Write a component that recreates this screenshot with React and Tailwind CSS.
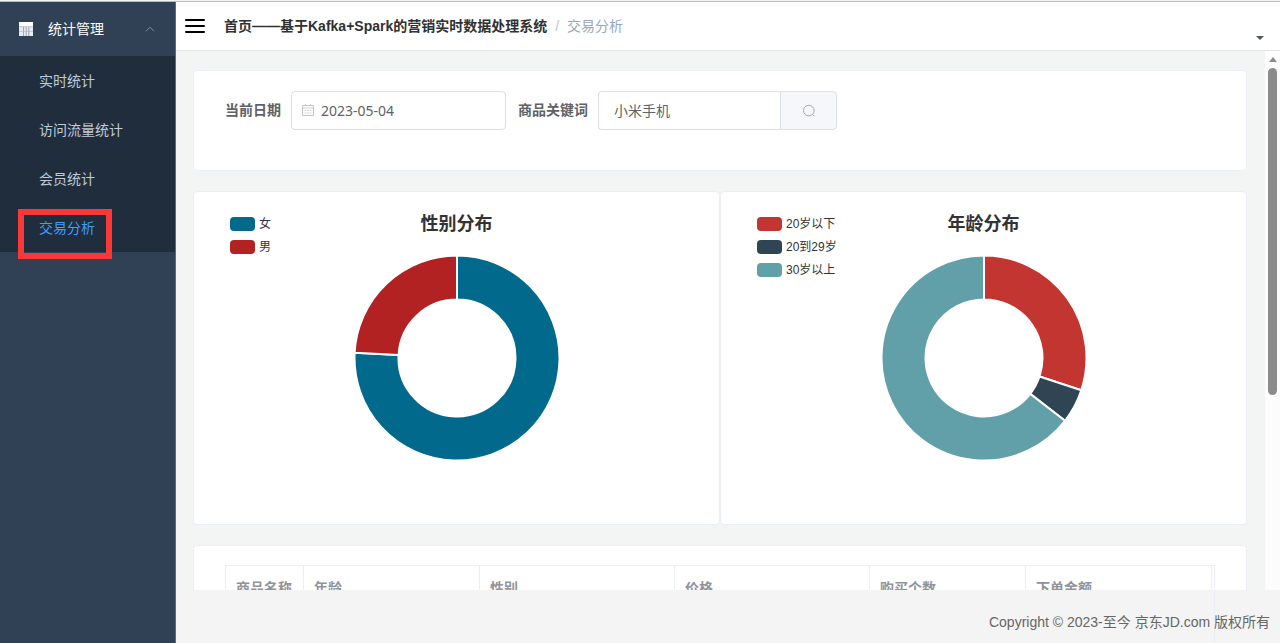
import React, { useState } from 'react'

const menuItems = ['实时统计', '访问流量统计', '会员统计', '交易分析']

const genderData = [
  { name: '女', value: 758, color: '#00698c' },
  { name: '男', value: 242, color: '#b22222' },
]

const ageData = [
  { name: '20岁以下', value: 301, color: '#c23531' },
  { name: '20到29岁', value: 54, color: '#2f4554' },
  { name: '30岁以上', value: 645, color: '#61a0a8' },
]

const columns = ['商品名称', '年龄', '性别', '价格', '购买个数', '下单金额']

// Point on a circle, share 0 is at the top and goes clockwise
function point(radius, share) {
  const angle = share * Math.PI * 2
  return `${102 + radius * Math.sin(angle)} ${102 - radius * Math.cos(angle)}`
}

function Donut({ data, label }) {
  const total = data.reduce((sum, item) => sum + item.value, 0)
  let current = 0

  return (
    <svg className="w-[204px] h-[204px]" viewBox="0 0 204 204" role="img" aria-label={label}>
      {data.map((item) => {
        const start = current / total
        current += item.value
        const end = current / total
        const large = end - start > 0.5 ? 1 : 0
        return (
          <path
            key={item.name}
            fill={item.color}
            stroke="#fff"
            strokeWidth="2"
            strokeLinejoin="bevel"
            d={`M${point(102.5, start)} A102.5 102.5 0 ${large} 1 ${point(102.5, end)} L${point(58.5, end)} A58.5 58.5 0 ${large} 0 ${point(58.5, start)} Z`}
          />
        )
      })}
    </svg>
  )
}

function ChartPanel({ title, data }) {
  return (
    <section className="grid grid-cols-[1fr_auto_1fr] h-[334px] bg-white border border-[#ebeef5] rounded pt-5">
      <ul className="pl-9">
        {data.map((item) => (
          <li key={item.name} className="flex items-center gap-1 h-[23px] text-xs text-[#333]">
            <span className="w-[25px] h-3.5 rounded" style={{ backgroundColor: item.color }} />
            {item.name}
          </li>
        ))}
      </ul>
      <div className="flex flex-col items-center">
        <h2 className="text-lg leading-6 font-bold text-[#333] mb-5">{title}</h2>
        <Donut data={data} label={title} />
      </div>
    </section>
  )
}

function Sidebar() {
  const [open, setOpen] = useState(true)

  return (
    <aside className="w-44 shrink-0 bg-[#304156] border-r border-[#5b6a7c]">
      <button
        type="button"
        onClick={() => setOpen(!open)}
        className="flex items-center w-full h-[54px] pl-[19px] pr-5 text-white"
      >
        <svg className="w-3.5 h-3.5" viewBox="0 0 14 14">
          <path fill="#e9ecef" d="M0 0h14v14H0z" />
          <path fill="#fff" d="M0 0h14v4H0z" />
          <path stroke="#8d98a5" strokeWidth=".8" d="M4.5 5v9M7.2 5v9M9.8 5v9" />
          <path stroke="#a9b2bc" strokeWidth=".6" d="M0 4.7h14M0 9.4h14" />
        </svg>
        <span className="ml-[15px]">统计管理</span>
        <svg className="w-2.5 h-1.5 ml-auto" viewBox="0 0 10 6" fill="none" stroke="#7f8b99">
          <path d="M1 5.2 5 1.2l4 4" />
        </svg>
      </button>

      {open && (
        <nav className="bg-[#1f2d3d]">
          {menuItems.map((item) => (
            <a
              key={item}
              href="#"
              className={`relative flex items-center h-[49px] pl-[39px] ${item === '交易分析' ? 'text-[#409eff]' : 'text-[#bfcbd9]'}`}
            >
              {item}
              {item === '交易分析' && (
                <span className="absolute left-[18px] top-1.5 w-[94px] h-[50px] border-6 border-[#fb3838]" />
              )}
            </a>
          ))}
        </nav>
      )}
    </aside>
  )
}

function Header() {
  return (
    <header className="flex items-center h-[49px] shrink-0 bg-white border-b border-[#e4e6e8] pl-[9px] pr-4">
      <button type="button" aria-label="菜单">
        <svg className="w-5 h-4" viewBox="0 0 20 16" stroke="#000" strokeWidth="2" strokeLinecap="round">
          <path d="M1 2h18M1 8h18M1 14h18" />
        </svg>
      </button>
      <div className="flex items-center ml-[19px]">
        <a href="#" className="font-bold text-[#303133]">首页——基于Kafka+Spark的营销实时数据处理系统</a>
        <span className="mx-2 text-[#c0c4cc]">/</span>
        <span className="text-[#97a8be]">交易分析</span>
      </div>
      <button type="button" aria-label="更多" className="ml-auto self-end pb-2.5">
        <svg className="w-2 h-1" viewBox="0 0 8 4">
          <path fill="#4f5761" d="M0 0h8L4 4z" />
        </svg>
      </button>
    </header>
  )
}

function FilterCard() {
  return (
    <form className="flex items-start h-[101px] bg-white border border-[#ebeef5] rounded pt-5 pl-[31px] text-[#606266]">
      <label htmlFor="date" className="leading-[39px] font-bold mr-2.5">当前日期</label>
      <div className="relative">
        <input
          id="date"
          type="text"
          defaultValue="2023-05-04"
          className="w-[215px] h-[39px] border border-[#dcdfe6] rounded pl-[29px] font-['Noto_Sans']"
        />
        <svg className="absolute left-[11px] top-[13px] w-3 h-3" viewBox="0 0 12 12" fill="none" stroke="#c0c4cc">
          <path d="M.5 1.5h11v10H.5z" />
          <path strokeWidth=".8" d="M.5 4h11M3.5 0v2M8.5 0v2" />
          <path strokeWidth=".7" d="M2.5 6.5h2M5 6.5h2M7.5 6.5h2M2.5 9h2M5 9h2M7.5 9h2" />
        </svg>
      </div>
      <label htmlFor="keyword" className="leading-[39px] font-bold ml-3 mr-2.5">商品关键词</label>
      <input
        id="keyword"
        type="text"
        defaultValue="小米手机"
        className="w-[182px] h-[39px] border border-r-0 border-[#dcdfe6] rounded-l px-[15px] pb-0.5"
      />
      <button
        type="button"
        aria-label="搜索"
        className="flex items-center justify-center w-[57px] h-[39px] bg-[#f5f7fa] border border-[#dcdfe6] rounded-r"
      >
        <svg className="w-3.5 h-3.5" viewBox="0 0 14 14" fill="none" stroke="#a3a6ad">
          <circle cx="6.8" cy="6.6" r="5.3" />
          <path d="m10.6 10.4 2 2" />
        </svg>
      </button>
    </form>
  )
}

function OrderTable() {
  return (
    <section className="bg-white border border-[#ebeef5] rounded pt-[19px] px-[31px]">
      <table className="w-full table-fixed border-collapse border border-[#ebeef5] text-[#909399]">
        <colgroup>
          <col className="w-[78px]" />
          <col className="w-[176px]" />
          <col className="w-[195px]" />
          <col className="w-[195px]" />
          <col className="w-[156px]" />
          <col />
          <col className="w-[3px]" />
        </colgroup>
        <thead>
          <tr className="h-11">
            {columns.map((column) => (
              <th key={column} scope="col" className="border border-[#ebeef5] pl-2.5 text-left font-bold whitespace-nowrap">
                {column}
              </th>
            ))}
            {/* Scrollbar gutter */}
            <td />
          </tr>
        </thead>
      </table>
    </section>
  )
}

function Scrollbar() {
  return (
    <div className="flex flex-col items-center w-[15px] shrink-0 bg-[#fcfcfc] pt-1.5">
      <svg className="w-2 h-[5px]" viewBox="0 0 8 5">
        <path fill="#8b8b8b" d="M4 0l4 5H0z" />
      </svg>
      <div className="w-[9px] h-[327px] mt-1.5 rounded-full bg-[#8b8b8b]" />
    </div>
  )
}

export default function App() {
  return (
    <div className="flex flex-col h-screen overflow-hidden bg-[#f3f5f5] font-['Liberation_Sans','Noto_Sans_CJK_SC',sans-serif] text-sm">
      <div className="h-0.5 shrink-0 bg-[#f3f3f3] border-b border-[#bdbdbd]" />
      <div className="flex flex-1 min-h-0">
        <Sidebar />
        <div className="flex flex-col flex-1 min-w-0">
          <Header />
          <div className="flex flex-1 min-h-0">
            <main className="flex-1 min-w-0 overflow-hidden pl-[17px] pr-[18px] pt-[19px] space-y-5">
              <FilterCard />
              <div className="grid grid-cols-2">
                <ChartPanel title="性别分布" data={genderData} />
                <ChartPanel title="年龄分布" data={ageData} />
              </div>
              <OrderTable />
            </main>
            <Scrollbar />
          </div>
          <footer className="relative flex items-center justify-end h-[53px] shrink-0 bg-[#f4f4f4] pr-2.5 pt-2.5 text-[#666]">
            <span className="absolute right-[65px] inset-y-0 w-px bg-[#ebeef5]" />
            <p className="relative">Copyright © 2023-至今 京东JD.com 版权所有</p>
          </footer>
        </div>
      </div>
    </div>
  )
}
